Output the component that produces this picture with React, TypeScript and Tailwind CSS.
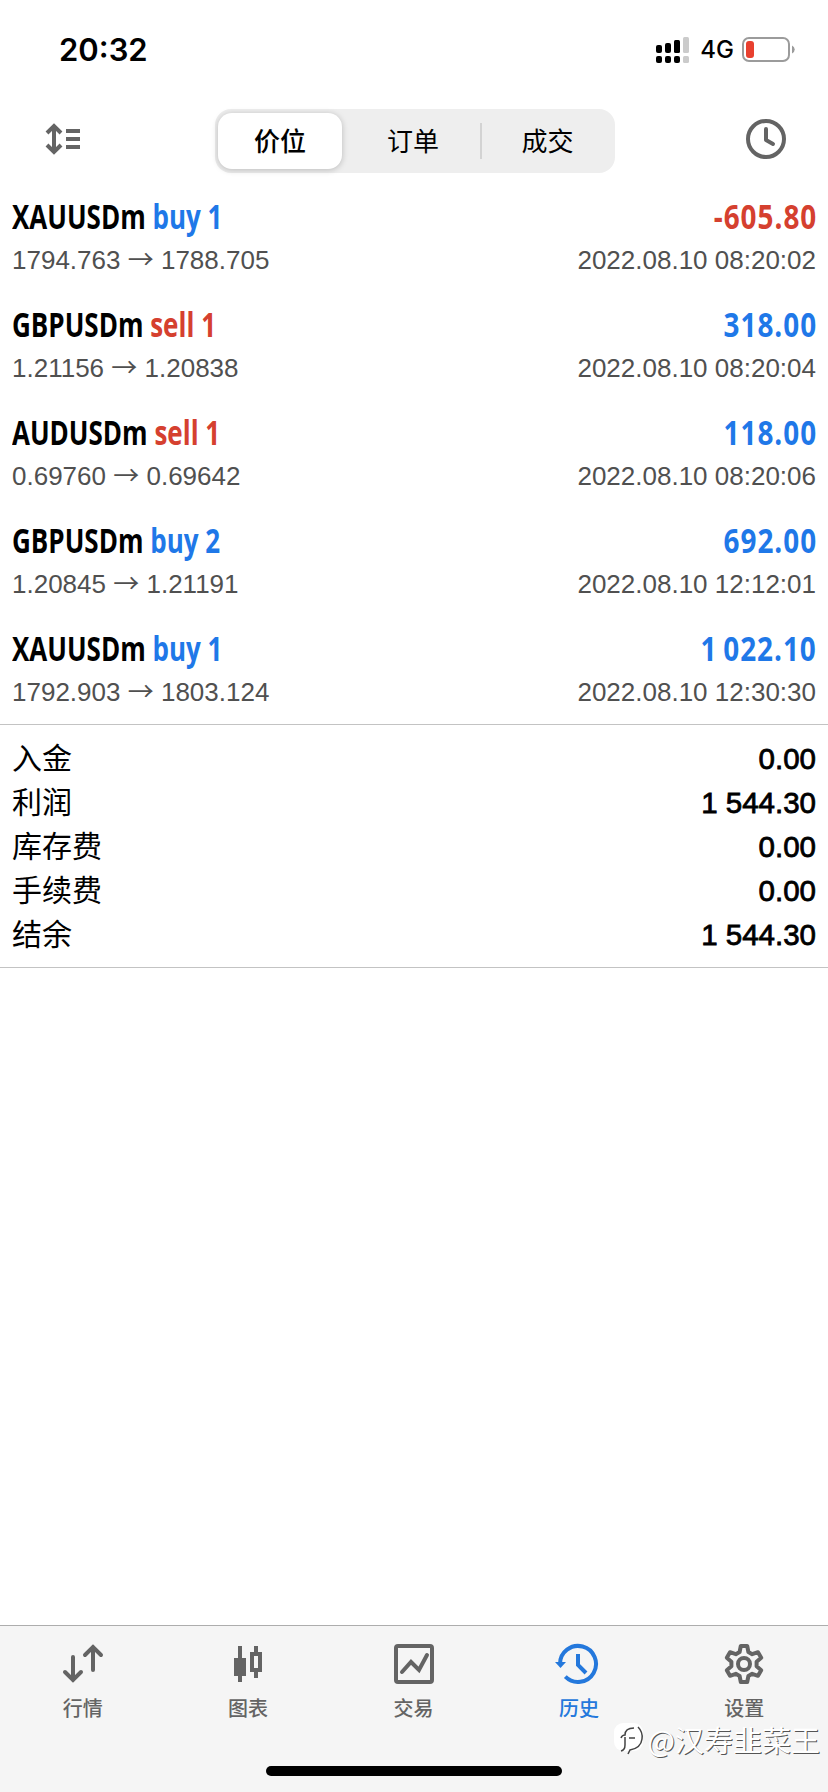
import type { ReactNode } from 'react'

interface Deal {
  symbol: string
  side: 'buy' | 'sell'
  volume: number
  open: string
  close: string
  profit: string
  time: string
}

const DEALS: Deal[] = [
  { symbol: 'XAUUSDm', side: 'buy', volume: 1, open: '1794.763', close: '1788.705', profit: '-605.80', time: '2022.08.10 08:20:02' },
  { symbol: 'GBPUSDm', side: 'sell', volume: 1, open: '1.21156', close: '1.20838', profit: '318.00', time: '2022.08.10 08:20:04' },
  { symbol: 'AUDUSDm', side: 'sell', volume: 1, open: '0.69760', close: '0.69642', profit: '118.00', time: '2022.08.10 08:20:06' },
  { symbol: 'GBPUSDm', side: 'buy', volume: 2, open: '1.20845', close: '1.21191', profit: '692.00', time: '2022.08.10 12:12:01' },
  { symbol: 'XAUUSDm', side: 'buy', volume: 1, open: '1792.903', close: '1803.124', profit: '1 022.10', time: '2022.08.10 12:30:30' },
]

const SUMMARY = [
  { label: '入金', value: '0.00' },
  { label: '利润', value: '1 544.30' },
  { label: '库存费', value: '0.00' },
  { label: '手续费', value: '0.00' },
  { label: '结余', value: '1 544.30' },
]

function StatusBar() {
  return (
    <div className="flex h-[99px] items-center justify-between pl-[59px] pr-8">
      <span className="font-['Inter',sans-serif] text-[31px] font-semibold leading-none">20:32</span>
      <div className="flex items-center">
        <svg width="34" height="28" viewBox="0 0 34 28">
          <g fill="#000">
            <rect x="0" y="9" width="6" height="8" rx="2" />
            <rect x="9" y="7" width="6" height="10" rx="2" />
            <rect x="18" y="4" width="6" height="13" rx="1.5" />
            <rect x="0" y="20" width="6" height="7" rx="2" />
            <rect x="9" y="20" width="6" height="7" rx="2" />
            <rect x="18" y="20" width="6" height="7" rx="2" />
          </g>
          <g fill="#cbcbcb">
            <rect x="27" y="1" width="6" height="16" rx="1.5" />
            <rect x="27" y="20" width="6" height="7" rx="1.5" />
          </g>
        </svg>
        <span className="ml-2.5 font-['Inter',sans-serif] text-[24px] font-medium leading-none">4G</span>
        <svg className="ml-2" width="54" height="26" viewBox="0 0 54 26">
          <rect x="1" y="1" width="46" height="23" rx="6" fill="none" stroke="#9b9b9b" strokeWidth="2" />
          <rect x="4" y="4" width="8" height="17" rx="3" fill="#e8402f" />
          <path d="M50 8.5a5 4.5 0 0 1 0 8z" fill="#9b9b9b" />
        </svg>
      </div>
    </div>
  )
}

function Toolbar() {
  return (
    <div className="flex h-20 items-center justify-between pl-[45px] pr-[42px]">
      <svg width="36" height="32" viewBox="0 0 36 32" fill="none" stroke="#646464" strokeWidth="4">
        <path d="M9 3v26M2 10l7-7 7 7M2 22l7 7 7-7" />
        <path d="M21 8h14M21 16h14M21 24h14" />
      </svg>
      <div className="ml-[3px] mt-1 flex h-16 w-[400px] items-center rounded-[16px] bg-[#eeeeee] p-1 pl-[3px] font-['Noto_Sans_CJK_SC',sans-serif] text-[26px]">
        <div className="flex h-14 w-[124px] items-center justify-center rounded-[14px] bg-white pb-1 font-medium shadow-[0_1px_6px_rgba(0,0,0,0.22)]">
          价位
        </div>
        <div className="flex flex-1 items-center justify-center pb-1 pl-1">订单</div>
        <div className="h-9 w-0.5 bg-[#d3d3d3]" />
        <div className="flex w-[129px] items-center justify-center pb-1 pl-0.5">成交</div>
      </div>
      <svg width="40" height="40" viewBox="0 0 40 40" fill="none" stroke="#646464" strokeWidth="4">
        <circle cx="20" cy="20" r="18" />
        <path d="M20 10v11l7 4" strokeLinecap="round" strokeLinejoin="round" />
      </svg>
    </div>
  )
}

function DealRow({ deal }: { deal: Deal }) {
  const sideColor = deal.side === 'buy' ? 'text-[#1f78e8]' : 'text-[#d5402f]'
  const profitColor = deal.profit.startsWith('-') ? 'text-[#d5402f]' : 'text-[#1f78e8]'

  return (
    <div className="h-[108px] px-3">
      <div className="flex h-[47px] justify-between whitespace-nowrap font-['Open_Sans',sans-serif] text-[34px] font-bold leading-[46px]">
        <span className="origin-left scale-x-[0.765]">
          {deal.symbol}{' '}
          <span className={sideColor}>
            {deal.side} {deal.volume}
          </span>
        </span>
        <span className={`-mr-px origin-right scale-x-[0.82] tracking-[1.2px] [word-spacing:-3px] ${profitColor}`}>{deal.profit}</span>
      </div>
      <div className="flex h-10 justify-between font-['Liberation_Sans',sans-serif] text-[26px] leading-[41px] text-[#505050]">
        <span>
          {deal.open} <span className="font-['Noto_Sans_CJK_SC',sans-serif] leading-none">→</span> {deal.close}
        </span>
        <span>{deal.time}</span>
      </div>
    </div>
  )
}

function Tab({ label, active, children }: { label: string; active?: boolean; children: ReactNode }) {
  return (
    <div className={`flex flex-1 flex-col items-center pt-[17px] ${active ? 'text-[#2478dc]' : 'text-[#646464]'}`}>
      {children}
      <span className="mt-2 font-['Noto_Sans_CJK_SC',sans-serif] text-[20px] font-medium leading-[30px]">{label}</span>
    </div>
  )
}

function TabBar() {
  return (
    <div className="relative flex h-[167px] border-t border-[#adadad] bg-[#f5f5f5] pr-px">
      <Tab label="行情">
        <svg width="42" height="42" viewBox="0 0 42 42" fill="none" stroke="currentColor" strokeWidth="4" strokeLinecap="round">
          <path d="M11 14v23M3 29l8 8 8-8M31 27V4M23 12l8-8 8 8" />
        </svg>
      </Tab>
      <Tab label="图表">
        <svg width="42" height="42" viewBox="0 0 42 42" fill="currentColor">
          <path d="M11 3h4v12h4v18h-4v6h-4v-6H7V15h4z" />
          <path fillRule="evenodd" d="M27 3h4v6h4v20h-4v6h-4v-6h-4V9h4zM27 13v12h4V13z" />
        </svg>
      </Tab>
      <Tab label="交易">
        <svg width="42" height="42" viewBox="0 0 42 42" fill="none" stroke="currentColor" strokeWidth="4" strokeLinecap="round">
          <rect x="3" y="3" width="36" height="36" rx="2" />
          <path d="M9 29l9-10 8 8 8-15" />
        </svg>
      </Tab>
      <Tab label="历史" active>
        <svg className="mr-px" width="48" height="42" viewBox="0 0 48 42" fill="none" stroke="currentColor" strokeWidth="4">
          <path d="M6 21A18 18 0 1 1 11.3 33.7" />
          <path d="M1 19h11l-5.500 6z" fill="currentColor" stroke="none" />
          <path d="M24 11v11l8 8" />
        </svg>
      </Tab>
      <Tab label="设置">
        <svg width="42" height="42" viewBox="-21 -21 42 42" fill="none" stroke="currentColor" strokeWidth="4" strokeLinejoin="round">
          <path d="M-3.200-18H3.200L4.400-12 8.200-9.800 14-11.800 17.200-6.200 12.600-2.200V2.200L17.200 6.200 14 11.800 8.200 9.800 4.400 12 3.200 18H-3.200L-4.400 12-8.200 9.800-14 11.800-17.200 6.200-12.600 2.200V-2.200L-17.200-6.200-14-11.800-8.200-9.800-4.400-12z" />
          <circle r="6" />
        </svg>
      </Tab>
      <div className="absolute bottom-4 left-[266px] h-2.5 w-[296px] rounded-full bg-black" />
      <Watermark />
    </div>
  )
}

function Watermark() {
  return (
    <div className="absolute right-2 top-[91px] flex items-center font-['Noto_Sans_CJK_SC',sans-serif] text-[29px] leading-[44px] text-white [text-shadow:1px_1px_0_#555]">
      <svg className="-ml-0.5 mr-0.5" width="32" height="34" viewBox="0 0 32 34">
        <rect x="0" y="1" width="29" height="28" rx="9" fill="#fff" />
        <path d="M7 29q4-1 4-6v-8M7 16q1-3 4-3 0-7 9-7M15 16h6M24 5q5 5 4 12-1 9-12 11l-2 4" fill="none" stroke="#444" strokeWidth="1.500" />
      </svg>
      @汉寿韭菜王
    </div>
  )
}

export default function App() {
  return (
    <div className="flex h-[1792px] w-[828px] flex-col bg-white text-black">
      <StatusBar />
      <Toolbar />
      <div className="mt-[14px]">
        {DEALS.map((deal) => (
          <DealRow key={deal.time} deal={deal} />
        ))}
      </div>
      <div className="-mt-[9px] h-[244px] border-y border-[#c3c3c3] px-3 pt-3">
        {SUMMARY.map((item) => (
          <div key={item.label} className="flex h-11 justify-between">
            <span className="font-['Noto_Sans_CJK_SC',sans-serif] text-[30px] leading-[38px]">{item.label}</span>
            <span className="font-['Liberation_Sans',sans-serif] text-[29.500px] leading-[44px] [-webkit-text-stroke:0.8px_#000]">{item.value}</span>
          </div>
        ))}
      </div>
      <div className="flex-1" />
      <TabBar />
    </div>
  )
}
